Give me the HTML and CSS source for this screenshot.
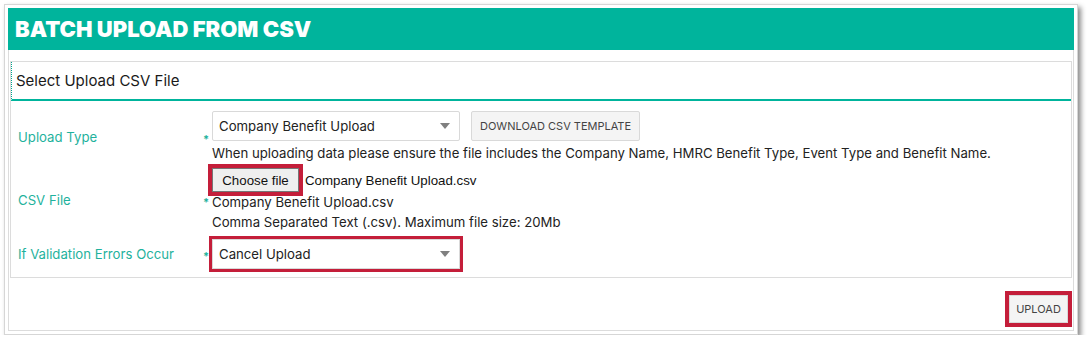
FILE: index.html
```html
<!DOCTYPE html>
<html lang="en">
<head>
  <meta charset="UTF-8" />
  <meta name="viewport" content="width=device-width, initial-scale=1.0"/>
  <title>Batch Upload From CSV</title>
  <link rel="stylesheet" href="styles.css">
</head>
<body>

  <div class="window">
    <div class="page-title">BATCH UPLOAD FROM CSV</div>

    <div class="content">
      <div class="panel">
        <div class="panel-heading">Select Upload CSV File</div>

        <div class="panel-body">
          <!-- Upload type -->
          <div class="form-row first">
            <div class="label">Upload Type</div>
            <div class="req">*</div>
            <div class="field">
              <div class="field-line">
                <div class="select-box">
                  <span>Company Benefit Upload</span>
                  <svg class="caret" width="10" height="6" viewBox="0 0 10 6"><path d="M0 0H10L5 6Z" fill="#808080"/></svg>
                </div>
                <button class="btn-grey">DOWNLOAD CSV TEMPLATE</button>
              </div>
              <div class="help">When uploading data please ensure the file includes the Company Name, HMRC Benefit Type, Event Type and Benefit Name.</div>
            </div>
          </div>

          <!-- CSV file -->
          <div class="form-row second">
            <div class="label">CSV File</div>
            <div class="req">*</div>
            <div class="field">
              <div class="file-line">
                <button class="choose-btn highlight">Choose file</button>
                <span class="file-name">Company Benefit Upload.csv</span>
              </div>
              <div class="help">Company Benefit Upload.csv</div>
              <div class="help">Comma Separated Text (.csv). Maximum file size: 20Mb</div>
            </div>
          </div>

          <!-- Validation -->
          <div class="form-row third">
            <div class="label">If Validation Errors Occur</div>
            <div class="req">*</div>
            <div class="field">
              <div class="select-box highlight thin">
                <span>Cancel Upload</span>
                <svg class="caret" width="10" height="6" viewBox="0 0 10 6"><path d="M0 0H10L5 6Z" fill="#808080"/></svg>
              </div>
            </div>
          </div>
        </div>
      </div>

      <div class="panel-footer">
        <button class="btn-grey upload highlight">UPLOAD</button>
      </div>
    </div>
  </div>

</body>
</html>
```

FILE: styles.css
```css
html, body {
  margin: 0;
  padding: 0;
  background-color: #fff;
  font-family: 'Inter', 'Liberation Sans', sans-serif;
  color: #222;
}

.window {
  margin: 4px 0 0 4px;
  width: 1066px;
  padding: 3px;
  border: 1px solid #d6d6d6;
  background-color: #fff;
  box-shadow: 3px 3px 5px rgba(0, 0, 0, 0.45);
}

.page-title {
  height: 42px;
  background-color: #00b49c;
  color: #fff;
  font-size: 22px;
  font-weight: 900;
  line-height: 43px;
  padding-left: 7px;
}

.content {
  border: 1px solid #dcdcdc;
  border-top: none;
  padding-top: 11px;
}

.panel {
  margin: 0 1px;
  border: 1px solid #dcdcdc;
}

.panel-heading {
  height: 37px;
  line-height: 37px;
  padding-left: 4px;
  font-size: 15px;
  color: #1a1a1a;
  border-left: 1px dotted #00a58f;
  border-bottom: 2px solid #00b49c;
}

.panel-body {
  padding: 0 0 8px 7px;
}

.form-row {
  display: grid;
  grid-template-columns: 185px 9px auto;
  align-items: center;
}

.form-row.first {
  margin-top: 10px;
}

.form-row.second {
  margin-top: 5px;
}

.form-row.third {
  margin-top: 7px;
}

.label {
  color: #1fb29d;
  font-size: 13.2px;
}

.req {
  color: #1fb29d;
  font-size: 11px;
  font-weight: bold;
  margin-top: 3px;
}

.field-line {
  display: flex;
  gap: 11px;
}

.select-box {
  height: 28px;
  border: 1px solid #d9d9d9;
  border-radius: 2px;
  background-color: #fff;
  display: flex;
  align-items: center;
  justify-content: space-between;
  padding: 0 9px 0 6px;
  width: 231px;
  font-size: 13.2px;
  color: #222;
}

.btn-grey {
  height: 30px;
  padding: 0 8px;
  background-color: #f4f4f4;
  border: 1px solid #d9d9d9;
  border-radius: 2px;
  font-family: 'Inter', 'Liberation Sans', sans-serif;
  font-size: 11px;
  color: #444;
}

.help {
  font-size: 13.2px;
  line-height: 20px;
}

.field-line + .help {
  margin-top: 2px;
}

.file-line {
  display: flex;
  align-items: center;
  gap: 6px;
  height: 24px;
}

.choose-btn {
  height: 24px;
  width: 87px;
  padding: 0;
  background-color: #efefef;
  border: 1px solid #767676;
  font-family: 'Liberation Sans', Arial, sans-serif;
  font-size: 13.3px;
  color: #111;
}

.file-name {
  font-family: 'Liberation Sans', Arial, sans-serif;
  font-size: 13.3px;
  color: #111;
}

.highlight {
  outline: 4px solid #c41e3a;
  border-radius: 0;
}

.highlight.thin {
  outline-width: 3px;
}

.panel-footer {
  display: flex;
  justify-content: flex-end;
  padding: 17px 5px 7px 0;
}

.upload {
  height: 28px;
  width: 59px;
  padding: 0;
}
```
